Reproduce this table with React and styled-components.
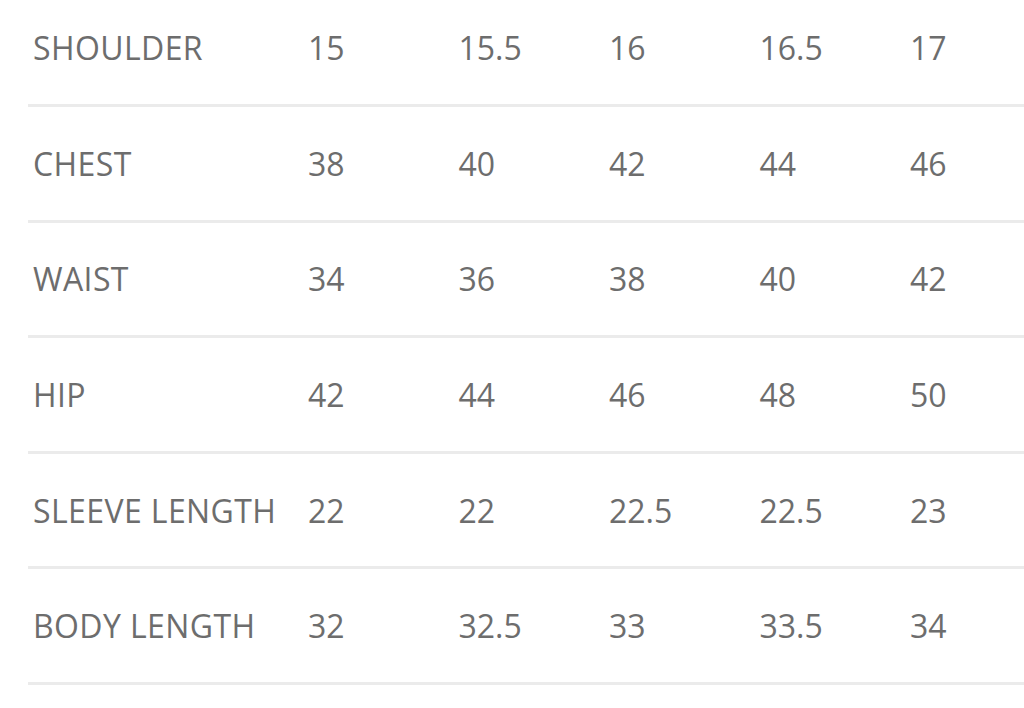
import React from 'react';
import styled, { createGlobalStyle } from 'styled-components';

const GlobalStyle = createGlobalStyle`
  html, body {
    margin: 0;
    padding: 0;
    background: #ffffff;
    overflow: hidden;
  }
`;

const Page = styled.div`
  width: 1024px;
  height: 708px;
  overflow: hidden;
  padding-left: 28px;
  box-sizing: border-box;
`;

const Table = styled.div`
  margin-top: -8.6px;
  width: 1100px;
`;

const Row = styled.div`
  display: grid;
  grid-template-columns: 275px repeat(5, 150.5px);
  align-items: center;
  height: 115.6px;
  box-sizing: border-box;
  border-bottom: 3px solid #ebebeb;
`;

const Cell = styled.div`
  padding-left: 5px;
  font-family: "Open Sans", "Liberation Sans", sans-serif;
  font-size: 32px;
  color: #6d6d6d;
  white-space: nowrap;
  letter-spacing: ${({ $label }) => ($label ? '0.4px' : '0')};
`;

const rows = [
  ['SHOULDER', '15', '15.5', '16', '16.5', '17'],
  ['CHEST', '38', '40', '42', '44', '46'],
  ['WAIST', '34', '36', '38', '40', '42'],
  ['HIP', '42', '44', '46', '48', '50'],
  ['SLEEVE LENGTH', '22', '22', '22.5', '22.5', '23'],
  ['BODY LENGTH', '32', '32.5', '33', '33.5', '34'],
];

export default function App() {
  return (
    <Page>
      <GlobalStyle />
      <Table>
        {rows.map(([label, ...values]) => (
          <Row key={label}>
            <Cell $label>{label}</Cell>
            {values.map((v, i) => (
              <Cell key={i}>{v}</Cell>
            ))}
          </Row>
        ))}
      </Table>
    </Page>
  );
}
